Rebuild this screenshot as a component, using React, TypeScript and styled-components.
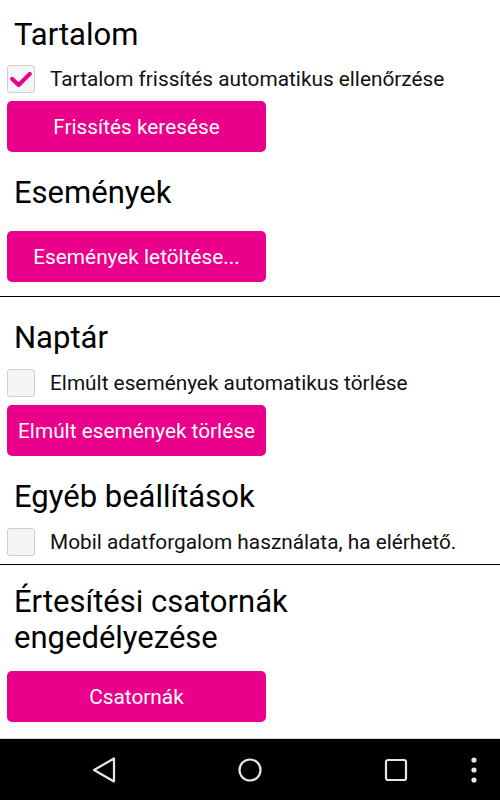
import { useState } from 'react';
import styled, { createGlobalStyle } from 'styled-components';

const magenta = '#ea008a';

const GlobalStyle = createGlobalStyle`
	html, body {
		margin: 0;
		padding: 0;
		background: #ffffff;
	}
	* {
		box-sizing: border-box;
	}
`;

const Screen = styled.div`
	display: flex;
	flex-direction: column;
	width: 500px;
	height: 800px;
	font-family: Roboto, 'Noto Sans', sans-serif;
	color: #000000;
	background: #ffffff;
	overflow: hidden;
`;

const Content = styled.div`
	flex: 1;
	display: flex;
	flex-direction: column;
	align-items: flex-start;
	padding: 17px 7px 0;
`;

const Title = styled.h2<{ $mt?: number }>`
	margin: ${(p) => p.$mt ?? 0}px 0 0 7px;
	max-width: 400px;
	font-size: 31px;
	font-weight: 400;
	line-height: 36px;
	color: #000000;
`;

const CheckRow = styled.label<{ $mt?: number }>`
	display: flex;
	flex-direction: row;
	align-items: center;
	gap: 15px;
	margin-top: ${(p) => p.$mt ?? 0}px;
	cursor: pointer;
`;

const Box = styled.span`
	display: flex;
	align-items: center;
	justify-content: center;
	width: 28px;
	height: 28px;
	border: 1px solid #cfcfcf;
	border-radius: 3px;
	background: #f5f5f5;
`;

const CheckLabel = styled.span`
	font-size: 20.8px;
	line-height: 24px;
	color: #111111;
`;

const Button = styled.button<{ $mt?: number }>`
	width: 259px;
	height: 51px;
	margin-top: ${(p) => p.$mt ?? 0}px;
	padding: 0;
	border: none;
	border-radius: 5px;
	background: ${magenta};
	color: #ffffff;
	font-family: Roboto, 'Noto Sans', sans-serif;
	font-size: 20.8px;
	cursor: pointer;
`;

const Divider = styled.hr<{ $mt?: number }>`
	align-self: stretch;
	margin: ${(p) => p.$mt ?? 0}px -7px 0;
	border: none;
	border-top: 1px solid #000000;
	height: 0;
`;

const NavBar = styled.nav`
	display: flex;
	flex-direction: row;
	align-items: center;
	height: 62px;
	background: #000000;
	border-top: 1px solid #d8d8d8;
	position: relative;
`;

const NavSlot = styled.div<{ $x: number }>`
	position: absolute;
	left: ${(p) => p.$x}px;
	top: 0;
	bottom: 0;
	display: flex;
	align-items: center;
	justify-content: center;
	width: 30px;
	margin-left: -15px;
`;

type CheckProps = { label: string; checked: boolean; onToggle: () => void; mt?: number };

const Check = ({ label, checked, onToggle, mt }: CheckProps) => (
	<CheckRow $mt={mt} onClick={onToggle}>
		<Box>
			{checked && (
				<svg width='28' height='28' viewBox='0 0 28 28'>
					<polyline
						points='4.5,14 11.5,20.5 23.5,8.5'
						fill='none'
						stroke={magenta}
						strokeWidth='4.4'
						strokeLinecap='round'
						strokeLinejoin='round'
					/>
				</svg>
			)}
		</Box>
		<CheckLabel>{label}</CheckLabel>
	</CheckRow>
);

const App = () => {
	const [autoCheck, setAutoCheck] = useState(true);
	const [autoDelete, setAutoDelete] = useState(false);
	const [mobileData, setMobileData] = useState(false);

	return (
		<Screen>
			<GlobalStyle />
			<Content>
				<Title>Tartalom</Title>
				<Check
					mt={12}
					label='Tartalom frissítés automatikus ellenőrzése'
					checked={autoCheck}
					onToggle={() => setAutoCheck(!autoCheck)}
				/>
				<Button $mt={8}>Frissítés keresése</Button>

				<Title $mt={23}>Események</Title>
				<Button $mt={20}>Események letöltése...</Button>
				<Divider $mt={14} />

				<Title $mt={23}>Naptár</Title>
				<Check
					mt={13}
					label='Elmúlt események automatikus törlése'
					checked={autoDelete}
					onToggle={() => setAutoDelete(!autoDelete)}
				/>
				<Button $mt={8}>Elmúlt események törlése</Button>

				<Title $mt={23}>Egyéb beállítások</Title>
				<Check
					mt={13}
					label='Mobil adatforgalom használata, ha elérhető.'
					checked={mobileData}
					onToggle={() => setMobileData(!mobileData)}
				/>
				<Divider $mt={8} />

				<Title $mt={19}>Értesítési csatornák engedélyezése</Title>
				<Button $mt={15}>Csatornák</Button>
			</Content>

			<NavBar>
				<NavSlot $x={104}>
					<svg width='26' height='28' viewBox='0 0 26 28'>
						<path
							d='M3 14 L23 2.5 L23 25.5 Z'
							fill='none'
							stroke='#e6e6e6'
							strokeWidth='2.2'
							strokeLinejoin='round'
						/>
					</svg>
				</NavSlot>
				<NavSlot $x={250}>
					<svg width='26' height='26' viewBox='0 0 26 26'>
						<circle cx='13' cy='13' r='10.5' fill='none' stroke='#e6e6e6' strokeWidth='2.2' />
					</svg>
				</NavSlot>
				<NavSlot $x={396}>
					<svg width='24' height='24' viewBox='0 0 24 24'>
						<rect x='2' y='2' width='20' height='20' rx='2' fill='none' stroke='#e6e6e6' strokeWidth='2.2' />
					</svg>
				</NavSlot>
				<NavSlot $x={474}>
					<svg width='8' height='28' viewBox='0 0 8 28'>
						<circle cx='4' cy='4' r='2.6' fill='#e6e6e6' />
						<circle cx='4' cy='14' r='2.6' fill='#e6e6e6' />
						<circle cx='4' cy='24' r='2.6' fill='#e6e6e6' />
					</svg>
				</NavSlot>
			</NavBar>
		</Screen>
	);
};

export default App;
